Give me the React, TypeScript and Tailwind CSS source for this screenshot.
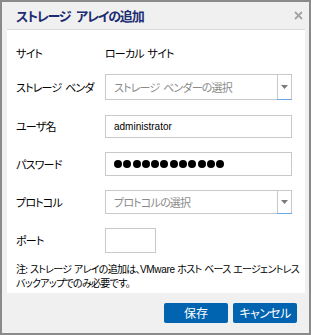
import React from "react";

const font = {
  fontFamily: '"Noto Sans CJK JP", "Liberation Sans", sans-serif',
};

function Select({ placeholder }: { placeholder: string }) {
  return (
    <div className="flex h-full w-[187px] border border-[#c9c9c9] bg-white">
      <div className="flex flex-1 items-center pl-[8px] text-[11px] tracking-[-0.8px] text-[#8a8a8a]">
        {placeholder}
      </div>
      <div className="relative flex w-[14px] items-center justify-center border-l border-[#c9c9c9]">
        <svg width="7" height="4" viewBox="0 0 7 4">
          <path d="M0 0 L7 0 L3.5 4 Z" fill="#7a7a7a" />
        </svg>
        <div className="absolute bottom-[-1px] left-[-1px] right-[-1px] h-[1px] bg-[#6aa8e8]" />
      </div>
    </div>
  );
}

function Row({
  label,
  h,
  mt,
  children,
}: {
  label: string;
  h: string;
  mt: string;
  children: React.ReactNode;
}) {
  return (
    <div className={`flex items-center ${h} ${mt}`}>
      <div className="w-[89px] text-[11px] tracking-[-0.8px] text-black">{label}</div>
      {children}
    </div>
  );
}

export default function App() {
  return (
    <div
      className="flex h-[335px] w-[311px] flex-col border-2 border-[#8a8a8a] bg-[#f0f0f0] [font-feature-settings:'palt'] [word-spacing:2px]"
      style={font}
    >
      <div className="relative flex h-[27px] items-center pl-[14px]">
        <span className="text-[13px] font-bold tracking-[-1.2px] text-[#1c2c70] [word-spacing:4px]">
          ストレージ アレイの追加
        </span>
        <svg
          className="absolute right-[6px] top-[9px]"
          width="9"
          height="9"
          viewBox="0 0 9 9"
        >
          <path d="M1 1 L8 8 M8 1 L1 8" stroke="#a3a3a3" strokeWidth="1.8" />
        </svg>
      </div>
      <div className="ml-[5px] mr-[4px] flex h-[264px] flex-col border-t border-[#dadada] bg-white pl-[9px]">
        <Row label="サイト" h="h-[24px]" mt="mt-[11px]">
          <span className="text-[11px] tracking-[-0.8px] text-black">ローカル サイト</span>
        </Row>
        <Row label="ストレージ ベンダ" h="h-[26px]" mt="mt-[9px]">
          <Select placeholder="ストレージ ベンダーの選択" />
        </Row>
        <Row label="ユーザ名" h="h-[23px]" mt="mt-[15px]">
          <div className="flex h-full w-[187px] items-center border border-[#c9c9c9] pl-[8px] font-['Liberation_Sans',sans-serif] text-[10px] text-black">
            administrator
          </div>
        </Row>
        <Row label="パスワード" h="h-[24px]" mt="mt-[14px]">
          <div className="flex h-full w-[187px] items-center gap-[1.3px] border border-[#c9c9c9] pl-[8px]">
            {Array.from({ length: 12 }).map((_, i) => (
              <div key={i} className="h-[8px] w-[8px] rounded-full bg-black" />
            ))}
          </div>
        </Row>
        <Row label="プロトコル" h="h-[24px]" mt="mt-[14px]">
          <Select placeholder="プロトコルの選択" />
        </Row>
        <Row label="ポート" h="h-[25px]" mt="mt-[14px]">
          <div className="h-full w-[51px] border border-[#c9c9c9]" />
        </Row>
        <div className="mt-[9px] flex flex-col whitespace-nowrap text-[10px] leading-[13px] tracking-[-0.7px] text-black [word-spacing:1px]">
          <span>
            注: ストレージ アレイの追加は、
            <span className="font-['Liberation_Sans',sans-serif] tracking-[-0.3px]">VMware</span>
            {" "}ホスト ベース エージェントレス
          </span>
          <span>バックアップでのみ必要です。</span>
        </div>
      </div>
      <div className="flex flex-1 justify-end gap-[5px] pr-[12px] pt-[10px]">
        <button className="flex h-[20px] w-[64px] items-center justify-center rounded-[2px] bg-[#0064b0] text-[12px] text-white">
          保存
        </button>
        <button className="flex h-[20px] w-[64px] items-center justify-center rounded-[2px] bg-[#0064b0] text-[12px] tracking-[-0.6px] text-white">
          キャンセル
        </button>
      </div>
    </div>
  );
}
